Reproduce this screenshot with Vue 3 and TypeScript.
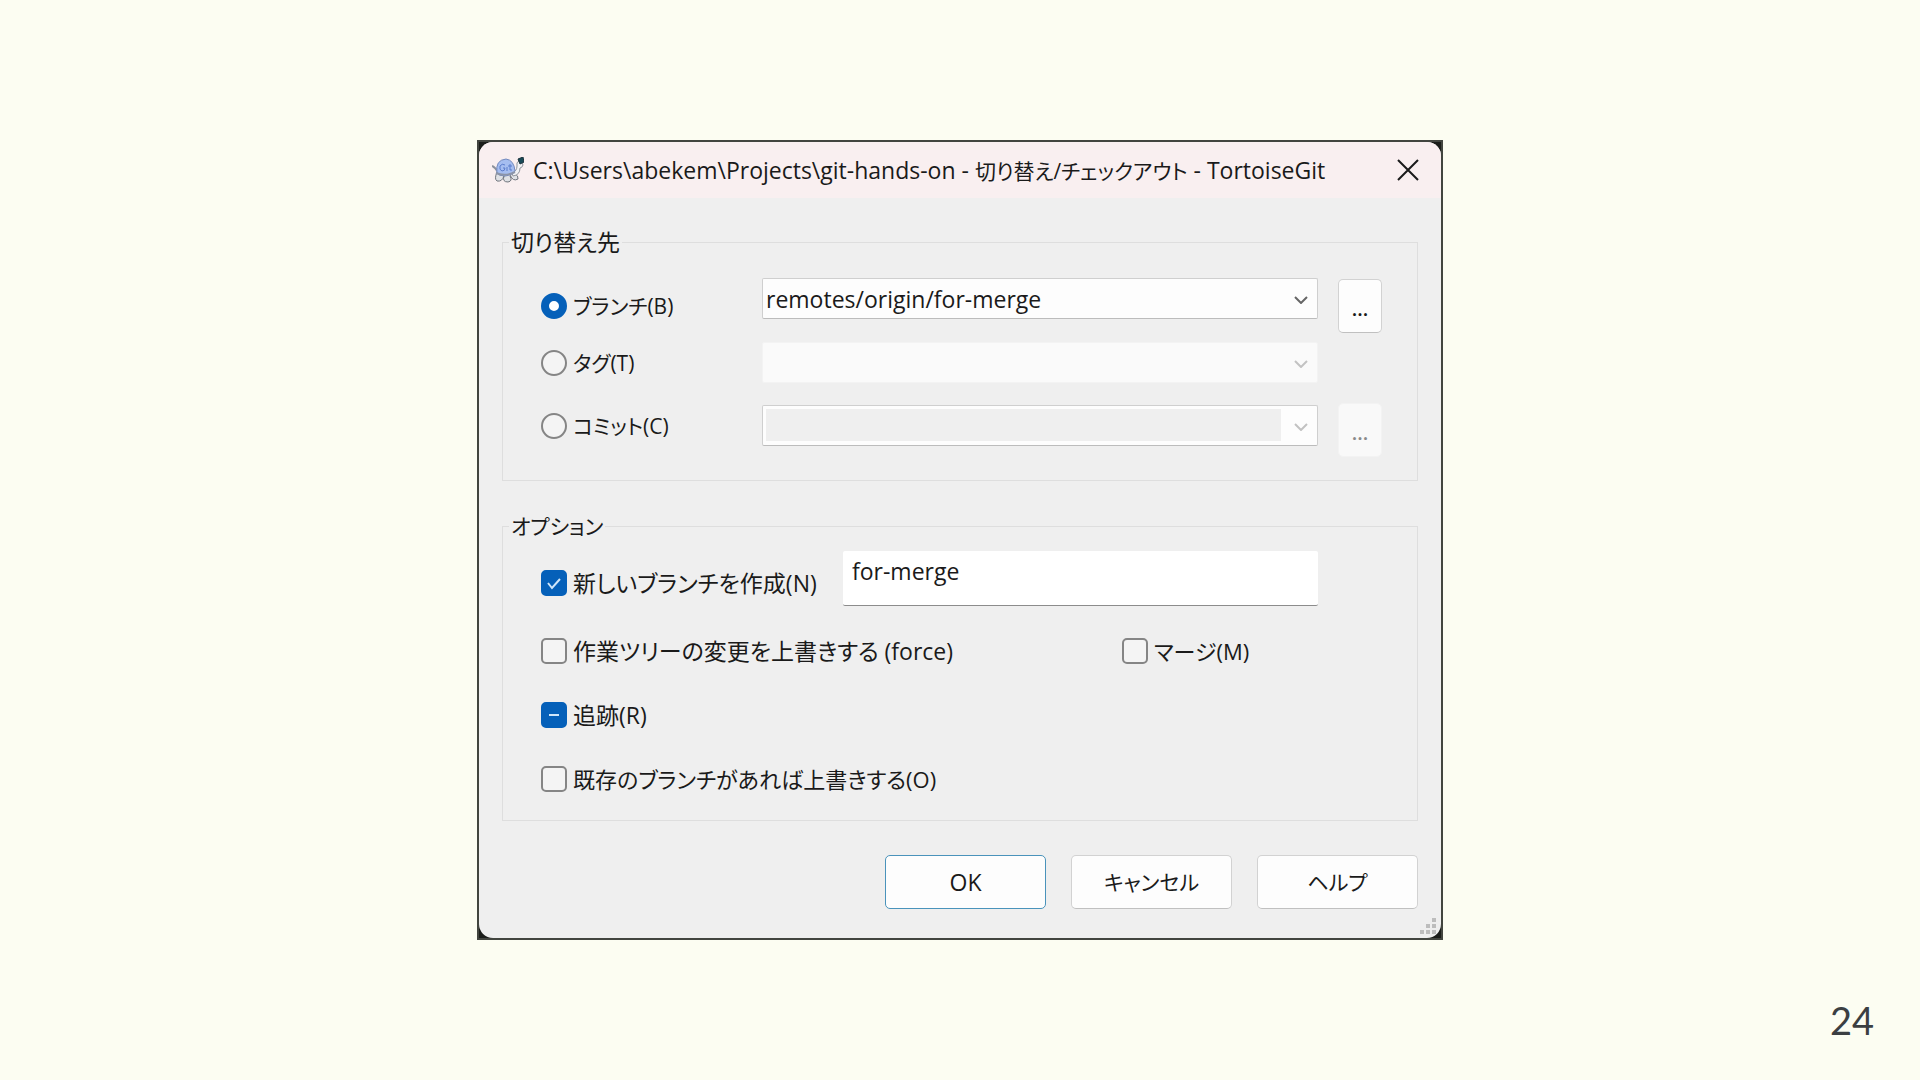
<script setup lang="ts">
import { ref } from 'vue'

type Target = 'branch' | 'tag' | 'commit'

const target = ref<Target>('branch')
const branch = ref('remotes/origin/for-merge')
const createBranch = ref(true)
const branchName = ref('for-merge')
const force = ref(false)
const merge = ref(false)
const track = ref(false)
const override = ref(false)
</script>

<template>
  <main class="slide">
    <section class="frame" role="dialog" aria-labelledby="dialog-title">
      <form class="dialog" @submit.prevent>
        <header class="titlebar">
          <svg class="logo" viewBox="0 0 32 26" aria-hidden="true">
            <path d="M0 9 Q3 10 6 15" stroke="#8d929c" stroke-width="2" fill="none" />
            <path d="M5 15 Q2 22 5 24 Q10 25 12 19 M12 19 Q10 25 16 25 Q21 24 18 19 M18 18 Q21 25 26 22 Q27 19 22 16" fill="#dfe1e5" stroke="#70757d" stroke-width="1" />
            <path d="M20 16 Q25 14 25 9 Q24 5 27 4 Q31 5 31 8 Q30 11 28 11 Q28 18 21 19 Z" fill="#f1f2f4" stroke="#90959d" stroke-width="1" />
            <path d="M5 16 Q3 3 14 2 Q22 3 23 14 Q21 18 13 19 Q7 19 5 16 Z" fill="#a5bdf0" stroke="#7289bd" stroke-width="1" />
            <path d="M4 16 Q13 20 23 15" stroke="#8b94a8" stroke-width="2" fill="none" />
            <path d="M13 8 Q10 6 8 9 Q7 13 10 14 Q13 14 13 11 H11 M15 10 V14 M18 7 V13 L20 13 M16 9 H20" stroke="#5b7ccb" stroke-width="1" fill="none" />
            <path d="M26 2 L31 0 L32 5 L28 7 Z" fill="#174a57" stroke="#1c323c" stroke-width="1" />
          </svg>
          <h1 id="dialog-title" class="title">C:\Users\abekem\Projects\git-hands-on - <span class="kana">切り替え/チェックアウト</span> - TortoiseGit</h1>
          <button class="close" type="button" aria-label="閉じる">
            <svg viewBox="0 0 22 22" aria-hidden="true"><path d="M1 1 L21 21 M21 1 L1 21" /></svg>
          </button>
        </header>

        <div class="body">
          <fieldset class="group group-target">
            <legend>切り替え先</legend>
            <div class="row row-branch">
              <label class="choice">
                <input v-model="target" class="radio" type="radio" name="target" value="branch" />
                <span class="kana">ブランチ(B)</span>
              </label>
              <div class="combo">
                <select v-model="branch" class="combo-select" aria-label="ブランチ">
                  <option>remotes/origin/for-merge</option>
                </select>
                <svg class="chevron" viewBox="0 0 14 8" aria-hidden="true"><path d="M1 1 L7 7 L13 1" /></svg>
              </div>
              <button class="button browse" type="button" aria-label="ブランチを参照">...</button>
            </div>
            <div class="row row-tag">
              <label class="choice">
                <input v-model="target" class="radio" type="radio" name="target" value="tag" />
                <span class="kana">タグ(T)</span>
              </label>
              <div class="combo combo-off">
                <select class="combo-select" aria-label="タグ" disabled></select>
                <svg class="chevron" viewBox="0 0 14 8" aria-hidden="true"><path d="M1 1 L7 7 L13 1" /></svg>
              </div>
            </div>
            <div class="row row-commit">
              <label class="choice">
                <input v-model="target" class="radio" type="radio" name="target" value="commit" />
                <span class="kana">コミット(C)</span>
              </label>
              <div class="combo combo-edit">
                <select class="combo-select" aria-label="コミット" disabled></select>
                <svg class="chevron" viewBox="0 0 14 8" aria-hidden="true"><path d="M1 1 L7 7 L13 1" /></svg>
              </div>
              <button class="button browse" type="button" aria-label="コミットを参照" disabled>...</button>
            </div>
          </fieldset>

          <fieldset class="group group-options">
            <legend class="kana">オプション</legend>
            <div class="option option-new">
              <label class="choice">
                <span class="tick">
                  <input v-model="createBranch" class="check" type="checkbox" />
                  <svg v-if="createBranch" class="mark" viewBox="0 0 26 26" aria-hidden="true"><path d="M7 13 L11 18 L19 9" /></svg>
                </span>
                <span>新しいブランチを作成(N)</span>
              </label>
              <input v-model="branchName" class="name" type="text" aria-label="新しいブランチ名" />
            </div>
            <div class="option">
              <label class="choice">
                <span class="tick"><input v-model="force" class="check" type="checkbox" /></span>
                <span>作業ツリーの変更を上書きする (force)</span>
              </label>
              <label class="choice choice-merge">
                <span class="tick"><input v-model="merge" class="check" type="checkbox" /></span>
                <span class="mixed">マージ(M)</span>
              </label>
            </div>
            <div class="option">
              <label class="choice">
                <span class="tick">
                  <input v-model="track" class="check" type="checkbox" :indeterminate.prop="true" />
                  <svg class="mark" viewBox="0 0 26 26" aria-hidden="true"><path d="M8 13 H18" /></svg>
                </span>
                <span>追跡(R)</span>
              </label>
            </div>
            <div class="option">
              <label class="choice">
                <span class="tick"><input v-model="override" class="check" type="checkbox" /></span>
                <span class="mixed">既存のブランチがあれば上書きする(O)</span>
              </label>
            </div>
          </fieldset>

          <footer class="actions">
            <button class="button action primary" type="submit">OK</button>
            <button class="button action kana" type="button">キャンセル</button>
            <button class="button action kana" type="button">ヘルプ</button>
          </footer>
        </div>

        <svg class="grip" viewBox="0 0 16 16" aria-hidden="true">
          <path d="M12 0h4v4h-4z M6 6h4v4h-4z M12 6h4v4h-4z M0 12h4v4h-4z M6 12h4v4h-4z M12 12h4v4h-4z" />
        </svg>
      </form>
    </section>
    <span class="page-number">24</span>
  </main>
</template>

<style>
body {
  margin: 0;
  background: #fcfdf2;
}
</style>

<style scoped>
.slide {
  position: relative;
  display: flex;
  align-items: center;
  justify-content: center;
  min-height: 100vh;
  box-sizing: border-box;
  background: #fcfdf2;
  color: #1a1a1a;
  font-family: "Open Sans", "Noto Sans CJK JP", sans-serif;
  font-size: 23px;
  line-height: 32px;
  font-feature-settings: "palt";
}

.slide *,
.slide *::before {
  box-sizing: border-box;
}

.frame {
  width: 100%;
  max-width: 966px;
  border: 2px solid #42453f;
  background: #1b1d1a;
}

.dialog {
  position: relative;
  overflow: hidden;
  border-radius: 14px;
  background: #efefef;
}

.titlebar {
  display: flex;
  align-items: center;
  height: 56px;
  padding: 0 22px 0 13px;
  background: #f9eff0;
}

.logo {
  flex: none;
  width: 32px;
  height: 26px;
}

.title {
  flex: 1;
  margin: 0 0 0 9px;
  font-size: 23px;
  font-weight: 400;
  white-space: nowrap;
}

.close {
  display: flex;
  padding: 0;
  border: 0;
  background: none;
}

.close svg {
  width: 22px;
  height: 22px;
  fill: none;
  stroke: #1a1a1a;
  stroke-width: 2;
}

.body {
  padding: 28px 23px 29px;
}

.group {
  min-width: 0;
  margin: 0;
  padding: 0 35px 0 38px;
  border: 1px solid #dedede;
}

.group legend {
  margin-left: -32px;
  padding: 0 2px;
}

.group-target {
  height: 255px;
  padding-top: 20px;
}

.group-options {
  height: 311px;
  margin-top: 29px;
  padding-top: 9px;
}

.row {
  display: grid;
  grid-template-columns: 201px 1fr 44px;
  column-gap: 20px;
  align-items: center;
}

.row-branch {
  height: 56px;
  margin-bottom: 8px;
}

.row-branch .combo {
  align-self: start;
}

.row-tag {
  height: 41px;
  margin-bottom: 20px;
}

.row-commit {
  align-items: start;
  height: 54px;
}

.row-commit .choice {
  height: 46px;
}

.choice {
  display: flex;
  align-items: center;
  gap: 6px;
  white-space: nowrap;
}

.radio,
.check {
  display: block;
  flex: none;
  width: 26px;
  height: 26px;
  margin: 0;
  appearance: none;
  border: 2px solid #858585;
  background: #f4f4f4;
}

.radio {
  border-radius: 50%;
}

.radio:checked {
  border: 8px solid #0560b9;
  background: #ffffff;
}

.check {
  border-radius: 5px;
}

.check:checked,
.check:indeterminate {
  border-color: #0560b9;
  background: #0560b9;
}

.tick {
  position: relative;
  flex: none;
}

.mark {
  position: absolute;
  inset: 0;
  width: 26px;
  height: 26px;
  fill: none;
  stroke: #cfe6fa;
  stroke-width: 2;
  pointer-events: none;
}

.combo {
  position: relative;
  display: flex;
  height: 41px;
  border: 1px solid #cfcfcf;
  border-bottom-color: #bcbcbc;
  border-radius: 2px;
  background: #fdfdfd;
}

.combo-select {
  flex: 1;
  min-width: 0;
  padding: 0 40px 0 3px;
  appearance: none;
  border: 0;
  background: transparent;
  color: inherit;
  font: inherit;
  opacity: 1;
}

.chevron {
  position: absolute;
  top: 17px;
  right: 9px;
  width: 14px;
  height: 8px;
  fill: none;
  stroke: #666666;
  stroke-width: 2;
  pointer-events: none;
}

.combo-off {
  border-color: #f3f3f3;
  background: #fafafa;
}

.combo-edit {
  margin-top: 2px;
  padding: 3px 36px 4px 3px;
}

.combo-edit .combo-select {
  background: #efefef;
}

.combo-off .chevron,
.combo-edit .chevron {
  stroke: #c2c2c2;
}

.button {
  padding: 0;
  border: 1px solid #d2d2d2;
  border-bottom-color: #c0c0c0;
  border-radius: 5px;
  background: #fdfdfd;
  color: inherit;
  font: inherit;
}

.browse {
  height: 54px;
  padding-top: 6px;
  font-size: 20px;
  font-weight: 600;
}

.browse:disabled {
  border-color: #f3f3f3;
  background: #f9f9f9;
  color: #8a8a8a;
}

.option {
  display: flex;
  align-items: center;
  height: 64px;
}

.option-new {
  justify-content: space-between;
  margin-bottom: 4px;
}

.name {
  align-self: start;
  width: 475px;
  height: 55px;
  margin-right: 64px;
  padding: 0 9px 14px;
  border: 0;
  border-bottom: 1px solid #8c8c8c;
  border-radius: 2px;
  background: #ffffff;
  color: inherit;
  font: inherit;
}

.choice-merge {
  width: 260px;
  margin-left: auto;
}

.kana {
  font-size: 21px;
}

.mixed {
  font-size: 22px;
}

.actions {
  display: flex;
  justify-content: flex-end;
  gap: 25px;
  margin-top: 34px;
}

.action {
  width: 161px;
  height: 54px;
}

.primary {
  border-color: #4a93bb;
}

.grip {
  position: absolute;
  right: 5px;
  bottom: 4px;
  width: 16px;
  height: 16px;
  fill: #bdbdbd;
}

.page-number {
  position: absolute;
  right: 46px;
  bottom: 40px;
  color: #3b3f42;
  font-family: Lato, sans-serif;
  font-size: 38px;
  line-height: 40px;
}
</style>
